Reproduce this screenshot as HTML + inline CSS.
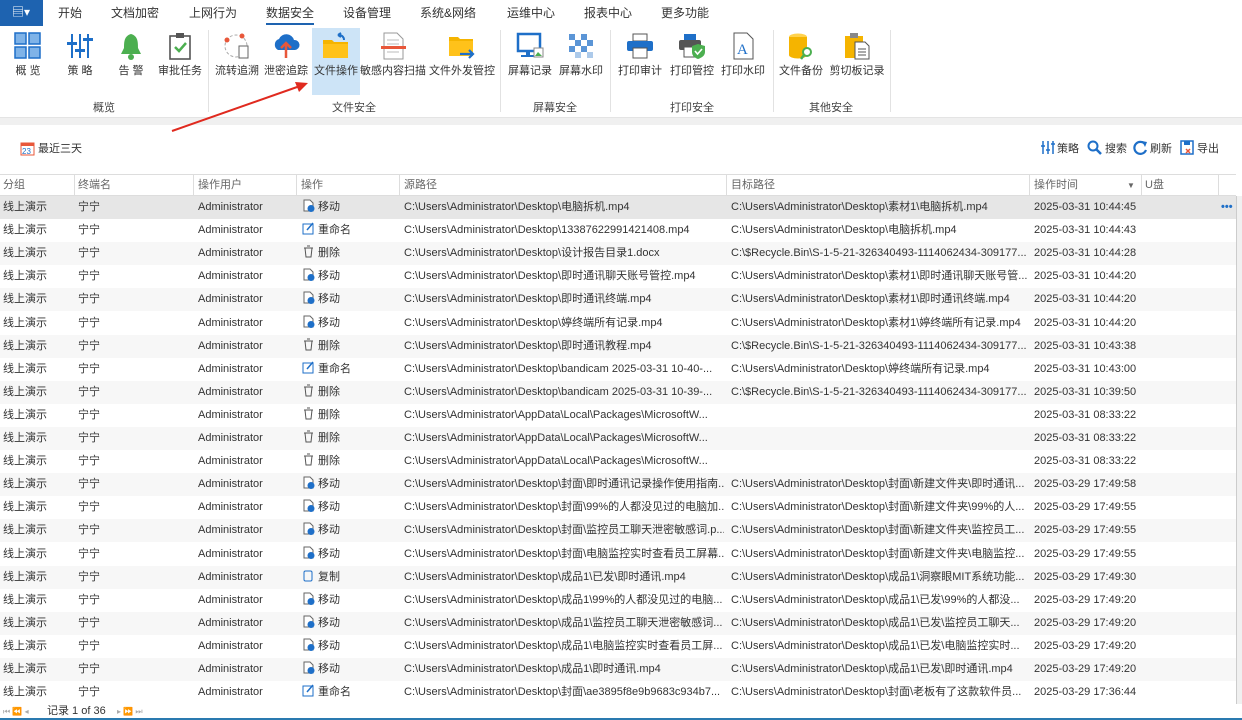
<!DOCTYPE html><html><head><meta charset="utf-8"><style>
*{margin:0;padding:0;box-sizing:border-box}
body{width:1242px;height:720px;overflow:hidden;background:#fff;font-family:"Liberation Sans","Noto Sans CJK SC",sans-serif;font-size:11px;color:#333;position:relative}
.a{position:absolute;white-space:nowrap;line-height:14px}
.tab{top:6px;font-size:12px;color:#333}
.lbl{top:64px;font-size:11px;color:#333;text-align:center;transform:translateX(-50%)}
.grp{top:101px;font-size:11px;color:#444;transform:translateX(-50%)}
.sep{top:30px;width:1px;height:82px;background:#e2e2e2}
.ic{top:32px;transform:translateX(-50%)}
.row{position:absolute;left:0;width:1236px;height:23.1px;font-size:11px;color:#333}
.row span{position:absolute;top:0;line-height:23px;height:23px;white-space:nowrap;overflow:hidden}
.hd span{position:absolute;top:0;line-height:21px;color:#666;font-size:11px}
.vl{position:absolute;top:174px;width:1px;height:22px;background:#ddd}
</style></head><body>
<div class="a" style="left:0;top:0;width:43px;height:26px;background:#1e63b0;color:#fff;font-size:12px;padding:5px 0 0 12px">▤▾</div>
<div class="a tab" style="left:58px">开始</div>
<div class="a tab" style="left:111px">文档加密</div>
<div class="a tab" style="left:189px">上网行为</div>
<div class="a tab" style="left:266px">数据安全</div>
<div class="a" style="left:266px;top:23px;width:48px;height:2px;background:#1e63b0"></div>
<div class="a tab" style="left:343px">设备管理</div>
<div class="a tab" style="left:420px">系统&amp;网络</div>
<div class="a tab" style="left:507px">运维中心</div>
<div class="a tab" style="left:584px">报表中心</div>
<div class="a tab" style="left:661px">更多功能</div>
<div class="a" style="left:312px;top:28px;width:48px;height:67px;background:#cde4f7"></div>
<svg class="a ic" style="left:28px" width="28" height="28"><g fill="#7fb3e8" stroke="#1e6fc8" stroke-width="1.5"><rect x="1" y="1" width="11" height="11"/><rect x="15" y="1" width="11" height="11"/><rect x="1" y="15" width="11" height="11"/><rect x="15" y="15" width="11" height="11"/></g></svg>
<svg class="a ic" style="left:80px" width="28" height="28"><g stroke="#1e6fc8" stroke-width="2"><line x1="6" y1="2" x2="6" y2="26"/><line x1="14" y1="2" x2="14" y2="26"/><line x1="22" y1="2" x2="22" y2="26"/></g><g fill="#1e6fc8"><rect x="1" y="10" width="10" height="3"/><rect x="9" y="17" width="10" height="3"/><rect x="17" y="6" width="10" height="3"/></g></svg>
<svg class="a ic" style="left:131px" width="28" height="28"><path d="M14 2 C7 4 7 10 7 16 L4 22 H24 L21 16 C21 10 21 4 14 2Z" fill="#4caf50"/><circle cx="14" cy="25" r="3" fill="#4caf50"/></svg>
<svg class="a ic" style="left:180px" width="28" height="28"><rect x="4" y="4" width="20" height="23" fill="#fff" stroke="#555" stroke-width="1.6"/><rect x="10" y="1" width="8" height="5" fill="#555"/><path d="M9 15 L13 19 L20 11" stroke="#4caf50" stroke-width="2.5" fill="none"/></svg>
<svg class="a ic" style="left:237px" width="30" height="28"><circle cx="14" cy="14" r="11" fill="none" stroke="#aaa" stroke-dasharray="3 2"/><circle cx="5" cy="8" r="2.5" fill="#e8573a"/><circle cx="20" cy="4" r="2.5" fill="#e8573a"/><rect x="17" y="14" width="9" height="12" fill="#fff" stroke="#666"/></svg>
<svg class="a ic" style="left:286px" width="28" height="28"><path d="M6 18 A6 6 0 0 1 7 7 A8 8 0 0 1 22 8 A5 5 0 0 1 23 18Z" fill="#1e6fc8"/><path d="M14 26 V12 M9 16 L14 11 L19 16" stroke="#e8573a" stroke-width="2.5" fill="none"/></svg>
<svg class="a ic" style="left:336px" width="28" height="28"><path d="M1 8 H10 L12 10 H26 V26 H1Z" fill="#f5b400"/><rect x="1" y="12" width="25" height="14" fill="#ffc21a"/><path d="M22 8 A5 5 0 0 0 16 3 M16 3 L19 1 M16 3 L19 5" stroke="#1e6fc8" stroke-width="2" fill="none"/></svg>
<svg class="a ic" style="left:393px" width="28" height="28"><path d="M5 1 H18 L24 7 V27 H5Z" fill="#fff" stroke="#999"/><g stroke="#bbb"><line x1="8" y1="8" x2="20" y2="8"/><line x1="8" y1="12" x2="20" y2="12"/><line x1="8" y1="20" x2="20" y2="20"/></g><rect x="2" y="14" width="25" height="3" fill="#e8573a"/></svg>
<svg class="a ic" style="left:462px" width="28" height="28"><path d="M1 5 H10 L12 7 H25 V24 H1Z" fill="#f5b400"/><rect x="1" y="9" width="24" height="15" fill="#ffc21a"/><path d="M12 22 H25 M21 18 L25 22 L21 26" stroke="#1e6fc8" stroke-width="2.2" fill="none"/></svg>
<svg class="a ic" style="left:530px" width="28" height="28"><rect x="2" y="2" width="22" height="17" fill="#fff" stroke="#1e6fc8" stroke-width="2.5"/><rect x="10" y="19" width="4" height="5" fill="#1e6fc8"/><rect x="5" y="23" width="14" height="2" fill="#1e6fc8"/><rect x="18" y="16" width="9" height="9" fill="#fff" stroke="#888"/><path d="M19 24 L22 20 L26 24Z" fill="#4caf50"/></svg>
<svg class="a ic" style="left:581px" width="28" height="28"><g fill="#5b95d6"><rect x="2" y="2" width="6" height="6"/><rect x="14" y="2" width="6" height="6"/><rect x="8" y="8" width="6" height="6"/><rect x="20" y="8" width="6" height="6"/><rect x="2" y="14" width="6" height="6"/><rect x="14" y="14" width="6" height="6"/><rect x="8" y="20" width="6" height="6" opacity=".5"/><rect x="20" y="20" width="6" height="6" opacity=".5"/></g></svg>
<svg class="a ic" style="left:640px" width="28" height="28"><rect x="7" y="2" width="14" height="7" fill="#fff" stroke="#555"/><rect x="1" y="9" width="26" height="10" rx="2" fill="#1e6fc8"/><rect x="7" y="16" width="14" height="10" fill="#fff" stroke="#555"/></svg>
<svg class="a ic" style="left:692px" width="28" height="28"><rect x="6" y="2" width="12" height="6" fill="#1e6fc8"/><rect x="1" y="8" width="22" height="10" rx="2" fill="#555"/><rect x="6" y="15" width="12" height="10" fill="#fff" stroke="#555"/><path d="M20 12 L27 14 V20 C27 24 23 26 20 27 C17 26 14 24 14 20 V14Z" fill="#4caf50"/><path d="M17 19 L19.5 22 L24 17" stroke="#fff" stroke-width="1.6" fill="none"/></svg>
<svg class="a ic" style="left:743px" width="28" height="28"><path d="M5 1 H18 L24 7 V27 H5Z" fill="#fff" stroke="#555"/><text x="8" y="22" font-family="Liberation Serif" font-size="15" fill="#1e6fc8">A</text></svg>
<svg class="a ic" style="left:801px" width="28" height="28"><ellipse cx="11" cy="5" rx="9" ry="3.5" fill="#ffd24d"/><path d="M2 5 V23 A9 3.5 0 0 0 20 23 V5" fill="#f5b400"/><circle cx="20" cy="20" r="4" fill="#fff" stroke="#4caf50" stroke-width="2"/><line x1="17" y1="23" x2="14" y2="27" stroke="#4caf50" stroke-width="2.5"/></svg>
<svg class="a ic" style="left:857px" width="28" height="28"><rect x="2" y="4" width="18" height="22" fill="#f5b400"/><rect x="7" y="1" width="8" height="5" fill="#888"/><path d="M12 10 H22 L26 14 V27 H12Z" fill="#fff" stroke="#555"/><g stroke="#555"><line x1="15" y1="17" x2="23" y2="17"/><line x1="15" y1="20" x2="23" y2="20"/><line x1="15" y1="23" x2="23" y2="23"/></g></svg>
<div class="a lbl" style="left:28px">概 览</div>
<div class="a lbl" style="left:80px">策 略</div>
<div class="a lbl" style="left:131px">告 警</div>
<div class="a lbl" style="left:180px">审批任务</div>
<div class="a lbl" style="left:237px">流转追溯</div>
<div class="a lbl" style="left:286px">泄密追踪</div>
<div class="a lbl" style="left:336px">文件操作</div>
<div class="a lbl" style="left:393px">敏感内容扫描</div>
<div class="a lbl" style="left:462px">文件外发管控</div>
<div class="a lbl" style="left:530px">屏幕记录</div>
<div class="a lbl" style="left:581px">屏幕水印</div>
<div class="a lbl" style="left:640px">打印审计</div>
<div class="a lbl" style="left:692px">打印管控</div>
<div class="a lbl" style="left:743px">打印水印</div>
<div class="a lbl" style="left:801px">文件备份</div>
<div class="a lbl" style="left:857px">剪切板记录</div>
<div class="a grp" style="left:104px">概览</div>
<div class="a grp" style="left:354px">文件安全</div>
<div class="a grp" style="left:555px">屏幕安全</div>
<div class="a grp" style="left:692px">打印安全</div>
<div class="a grp" style="left:831px">其他安全</div>
<div class="a sep" style="left:208px"></div><div class="a sep" style="left:500px"></div><div class="a sep" style="left:610px"></div><div class="a sep" style="left:773px"></div><div class="a sep" style="left:890px"></div>
<div class="a" style="left:0;top:117px;width:1242px;height:8px;background:#f0f0f0;border-top:1px solid #e4e4e4"></div>
<svg class="a" style="left:0;top:0" width="400" height="140"><line x1="172" y1="131" x2="300" y2="86" stroke="#e02a1f" stroke-width="2"/><path d="M308 83 L295 82 L299 92Z" fill="#e02a1f"/></svg>
<svg class="a" style="left:20px;top:141px" width="15" height="15"><rect x="1" y="2" width="13" height="12" fill="#fff" stroke="#e8573a"/><rect x="1" y="2" width="13" height="3" fill="#e8573a"/><text x="2" y="13" font-size="8" fill="#1e6fc8" font-family="Liberation Sans">23</text></svg>
<div class="a" style="left:38px;top:142px">最近三天</div>
<svg class="a" style="left:1040px;top:140px" width="15" height="15"><g stroke="#1e6fc8" stroke-width="1.5"><line x1="3" y1="1" x2="3" y2="14"/><line x1="8" y1="1" x2="8" y2="14"/><line x1="13" y1="1" x2="13" y2="14"/><line x1="1" y1="6" x2="5" y2="6"/><line x1="6" y1="10" x2="10" y2="10"/><line x1="11" y1="4" x2="15" y2="4"/></g></svg><div class="a" style="left:1057px;top:142px">策略</div>
<svg class="a" style="left:1087px;top:140px" width="15" height="15"><circle cx="6" cy="6" r="4.5" fill="none" stroke="#1e6fc8" stroke-width="2"/><line x1="9" y1="9" x2="14" y2="14" stroke="#1e6fc8" stroke-width="2.5"/></svg><div class="a" style="left:1105px;top:142px">搜索</div>
<svg class="a" style="left:1133px;top:140px" width="15" height="15"><path d="M12 4 A6 6 0 1 0 13 10" fill="none" stroke="#1e6fc8" stroke-width="2.2"/><path d="M9 1 L14 2 L12 7Z" fill="#1e6fc8"/></svg><div class="a" style="left:1150px;top:142px">刷新</div>
<svg class="a" style="left:1180px;top:140px" width="15" height="15"><rect x="1" y="1" width="12" height="13" fill="#fff" stroke="#1e6fc8" stroke-width="1.5"/><rect x="4" y="1" width="6" height="4" fill="#1e6fc8"/><path d="M6 9 L10 13 M10 9 L6 13" stroke="#e8573a" stroke-width="1.5"/></svg><div class="a" style="left:1197px;top:142px">导出</div>
<div class="a hd" style="left:0;top:174px;width:1236px;height:22px;border-top:1px solid #ddd;border-bottom:1px solid #ddd">
<span style="left:3px">分组</span><span style="left:78px">终端名</span><span style="left:198px">操作用户</span><span style="left:301px">操作</span><span style="left:404px">源路径</span><span style="left:731px">目标路径</span><span style="left:1034px">操作时间</span><span style="left:1127px;font-size:8px">▼</span><span style="left:1145px">U盘</span></div>
<div class="vl" style="left:74px"></div><div class="vl" style="left:193px"></div><div class="vl" style="left:296px"></div><div class="vl" style="left:399px"></div><div class="vl" style="left:726px"></div><div class="vl" style="left:1029px"></div><div class="vl" style="left:1141px"></div><div class="vl" style="left:1218px"></div>
<div class="a" style="left:1236px;top:196px;width:6px;height:510px;background:#f0f0f0;border-left:1px solid #ccc"></div>
<div id="rows"></div>
<div class="a" style="left:0;top:704px;width:1242px;height:16px;background:#fff;font-size:11px">
<span class="a" style="left:3px;top:1px;color:#aaa;font-size:8px">⏮ ⏪ ◂</span><span class="a" style="left:47px;top:0">记录 1 of 36</span><span class="a" style="left:117px;top:1px;color:#aaa;font-size:8px">▸ ⏩ ⏭</span></div>
<div class="a" style="left:0;top:718px;width:1242px;height:2px;background:#2a7ab0"></div>
<script>
var D=[
["移动","C:\\Users\\Administrator\\Desktop\\电脑拆机.mp4","C:\\Users\\Administrator\\Desktop\\素材1\\电脑拆机.mp4","2025-03-31 10:44:45"],
["重命名","C:\\Users\\Administrator\\Desktop\\13387622991421408.mp4","C:\\Users\\Administrator\\Desktop\\电脑拆机.mp4","2025-03-31 10:44:43"],
["删除","C:\\Users\\Administrator\\Desktop\\设计报告目录1.docx","C:\\$Recycle.Bin\\S-1-5-21-326340493-1114062434-309177...","2025-03-31 10:44:28"],
["移动","C:\\Users\\Administrator\\Desktop\\即时通讯聊天账号管控.mp4","C:\\Users\\Administrator\\Desktop\\素材1\\即时通讯聊天账号管...","2025-03-31 10:44:20"],
["移动","C:\\Users\\Administrator\\Desktop\\即时通讯终端.mp4","C:\\Users\\Administrator\\Desktop\\素材1\\即时通讯终端.mp4","2025-03-31 10:44:20"],
["移动","C:\\Users\\Administrator\\Desktop\\婷终端所有记录.mp4","C:\\Users\\Administrator\\Desktop\\素材1\\婷终端所有记录.mp4","2025-03-31 10:44:20"],
["删除","C:\\Users\\Administrator\\Desktop\\即时通讯教程.mp4","C:\\$Recycle.Bin\\S-1-5-21-326340493-1114062434-309177...","2025-03-31 10:43:38"],
["重命名","C:\\Users\\Administrator\\Desktop\\bandicam 2025-03-31 10-40-...","C:\\Users\\Administrator\\Desktop\\婷终端所有记录.mp4","2025-03-31 10:43:00"],
["删除","C:\\Users\\Administrator\\Desktop\\bandicam 2025-03-31 10-39-...","C:\\$Recycle.Bin\\S-1-5-21-326340493-1114062434-309177...","2025-03-31 10:39:50"],
["删除","C:\\Users\\Administrator\\AppData\\Local\\Packages\\MicrosoftW...","","2025-03-31 08:33:22"],
["删除","C:\\Users\\Administrator\\AppData\\Local\\Packages\\MicrosoftW...","","2025-03-31 08:33:22"],
["删除","C:\\Users\\Administrator\\AppData\\Local\\Packages\\MicrosoftW...","","2025-03-31 08:33:22"],
["移动","C:\\Users\\Administrator\\Desktop\\封面\\即时通讯记录操作使用指南...","C:\\Users\\Administrator\\Desktop\\封面\\新建文件夹\\即时通讯...","2025-03-29 17:49:58"],
["移动","C:\\Users\\Administrator\\Desktop\\封面\\99%的人都没见过的电脑加...","C:\\Users\\Administrator\\Desktop\\封面\\新建文件夹\\99%的人...","2025-03-29 17:49:55"],
["移动","C:\\Users\\Administrator\\Desktop\\封面\\监控员工聊天泄密敏感词.p...","C:\\Users\\Administrator\\Desktop\\封面\\新建文件夹\\监控员工...","2025-03-29 17:49:55"],
["移动","C:\\Users\\Administrator\\Desktop\\封面\\电脑监控实时查看员工屏幕...","C:\\Users\\Administrator\\Desktop\\封面\\新建文件夹\\电脑监控...","2025-03-29 17:49:55"],
["复制","C:\\Users\\Administrator\\Desktop\\成品1\\已发\\即时通讯.mp4","C:\\Users\\Administrator\\Desktop\\成品1\\洞察眼MIT系统功能...","2025-03-29 17:49:30"],
["移动","C:\\Users\\Administrator\\Desktop\\成品1\\99%的人都没见过的电脑...","C:\\Users\\Administrator\\Desktop\\成品1\\已发\\99%的人都没...","2025-03-29 17:49:20"],
["移动","C:\\Users\\Administrator\\Desktop\\成品1\\监控员工聊天泄密敏感词...","C:\\Users\\Administrator\\Desktop\\成品1\\已发\\监控员工聊天...","2025-03-29 17:49:20"],
["移动","C:\\Users\\Administrator\\Desktop\\成品1\\电脑监控实时查看员工屏...","C:\\Users\\Administrator\\Desktop\\成品1\\已发\\电脑监控实时...","2025-03-29 17:49:20"],
["移动","C:\\Users\\Administrator\\Desktop\\成品1\\即时通讯.mp4","C:\\Users\\Administrator\\Desktop\\成品1\\已发\\即时通讯.mp4","2025-03-29 17:49:20"],
["重命名","C:\\Users\\Administrator\\Desktop\\封面\\ae3895f8e9b9683c934b7...","C:\\Users\\Administrator\\Desktop\\封面\\老板有了这款软件员...","2025-03-29 17:36:44"]];
var ic={"移动":'<svg width="13" height="13" style="vertical-align:-2px"><path d="M2 1H8L11 4V12H2Z" fill="#fff" stroke="#666"/><circle cx="9" cy="9.5" r="3.5" fill="#1e6fc8"/></svg>',
"重命名":'<svg width="13" height="13" style="vertical-align:-2px"><rect x="1" y="2" width="10" height="10" fill="none" stroke="#1e6fc8"/><path d="M5 8L11 1" stroke="#1e6fc8" stroke-width="1.5"/></svg>',
"删除":'<svg width="13" height="13" style="vertical-align:-2px"><path d="M3 3H10L9 12H4Z M2 3H11 M5 1H8" fill="none" stroke="#555"/></svg>',
"复制":'<svg width="13" height="13" style="vertical-align:-2px"><rect x="2" y="2" width="8" height="10" rx="1.5" fill="none" stroke="#1e6fc8"/></svg>'};
var h="";D.forEach(function(r,i){var y=196+i*23.1;var bg=i==0?"#e6e6e6":(i%2?"#fff":"#f7f7f7");
h+='<div class="row" style="top:'+y+'px;background:'+bg+'"><span style="left:3px">线上演示</span><span style="left:78px">宁宁</span><span style="left:198px">Administrator</span><span style="left:302px">'+ic[r[0]]+' '+r[0]+'</span><span style="left:404px;width:320px">'+r[1]+'</span><span style="left:731px;width:296px">'+r[2]+'</span><span style="left:1034px">'+r[3]+'</span>'+(i==0?'<span style="left:1221px;color:#1e6fc8;font-weight:bold">•••</span>':'')+'</div>';});
document.getElementById("rows").innerHTML=h;
</script>
</body></html>
